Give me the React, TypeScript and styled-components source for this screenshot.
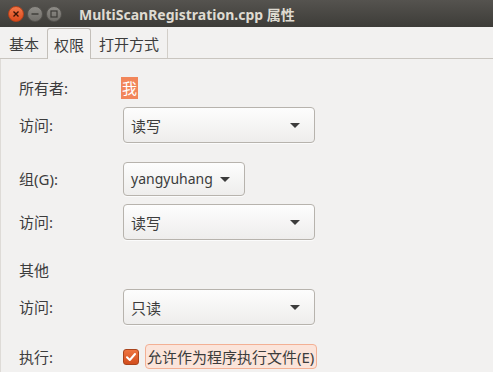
import styled, { createGlobalStyle } from "styled-components";

const GlobalStyle = createGlobalStyle`
  html, body {
    margin: 0;
    padding: 0;
    background: #f2f1f0;
  }
  body {
    font-family: "Noto Sans", "Noto Sans CJK SC", sans-serif;
    font-size: 15px;
    color: #3c3c3c;
  }
`;

const Window = styled.div`
  width: 493px;
  height: 372px;
  overflow: hidden;
  background: #f2f1f0;
  display: flex;
  flex-direction: column;
`;

const TitleBar = styled.div`
  height: 27px;
  flex: none;
  display: flex;
  align-items: center;
  padding-left: 8px;
  background: linear-gradient(#55534f, #3d3c38);
  box-sizing: border-box;
`;

const WindowButtons = styled.div`
  display: flex;
  gap: 3px;
  margin-right: 17px;
  margin-top: 1px;
`;

const WinButton = styled.div<{ $kind: "close" | "plain" }>`
  width: 16px;
  height: 16px;
  border-radius: 50%;
  display: flex;
  align-items: center;
  justify-content: center;
  box-sizing: border-box;
  border: 1px solid ${(p) => (p.$kind === "close" ? "#b8421a" : "#55534f")};
  background: ${(p) =>
    p.$kind === "close"
      ? "linear-gradient(#f2784a, #dc4a1c)"
      : "linear-gradient(#8e8c87, #706e69)"};
`;

const Title = styled.div`
  font-size: 14px;
  font-weight: 700;
  color: #dfdbd2;
  margin-top: 1px;
  white-space: nowrap;
`;

const TabBar = styled.div`
  height: 32px;
  flex: none;
  display: flex;
  align-items: flex-end;
  padding-left: 2px;
  gap: 1px;
  border-bottom: 1px solid #c9c5bf;
  box-sizing: border-box;
`;

const Tab = styled.div<{ $active?: boolean }>`
  padding: 0 6px;
  display: flex;
  align-items: center;
  border: 1px solid ${(p) => (p.$active ? "#c3bfb9" : "transparent")};
  border-bottom: none;
  border-radius: 3px 3px 0 0;
  background: ${(p) => (p.$active ? "#f4f3f2" : "transparent")};
  margin-bottom: ${(p) => (p.$active ? "-1px" : "0")};
  height: ${(p) => (p.$active ? "31px" : "30px")};
  box-sizing: border-box;
  font-size: 15px;
  color: #3c3c3c;
`;

const TabEnd = styled.div`
  width: 1px;
  height: 29px;
  background: #d2cec8;
`;

const Content = styled.div`
  flex: 1;
  display: flex;
  flex-direction: column;
  gap: 19px;
  padding: 18px 0 0 18px;
  border-left: 1px solid #dedbd7;
`;

const Section = styled.div`
  display: grid;
  grid-template-columns: 104px auto;
  justify-content: start;
  justify-items: start;
  align-items: center;
  row-gap: 8px;
`;

const Label = styled.div`
  font-size: 15px;
  line-height: 22px;
  color: #3c3c3c;
`;

const OwnerName = styled.span`
  margin-left: -2px;
  padding: 0 1px;
  line-height: 22px;
  background: #f2865a;
  color: #ffffff;
`;

const Combo = styled.div<{ $width?: number; $height?: number }>`
  width: ${(p) => (p.$width ? `${p.$width}px` : "auto")};
  height: ${(p) => p.$height ?? 36}px;
  box-sizing: border-box;
  display: flex;
  align-items: center;
  justify-content: space-between;
  gap: 7px;
  padding: 0 13px 0 7px;
  border: 1px solid #b7b3ad;
  border-radius: 4px;
  background: linear-gradient(#fdfdfd, #eeedec);
  box-shadow: 0 1px 0 rgba(255, 255, 255, 0.7);
  font-size: 15px;
  color: #3c3c3c;
`;

const ComboText = styled.span<{ $latin?: boolean }>`
  font-size: ${(p) => (p.$latin ? "14px" : "15px")};
  margin-top: ${(p) => (p.$latin ? "-2px" : "0")};
`;

const Arrow = styled.span`
  width: 0;
  height: 0;
  border-left: 5px solid transparent;
  border-right: 5px solid transparent;
  border-top: 5px solid #3c3c3c;
  margin-right: 1px;
`;

const CheckRow = styled.div`
  display: flex;
  align-items: center;
  gap: 6px;
`;

const Checkbox = styled.div`
  width: 16px;
  height: 16px;
  box-sizing: border-box;
  border-radius: 3px;
  border: 1px solid #a9441c;
  background: linear-gradient(#ee7440, #d24d1d);
  display: flex;
  align-items: center;
  justify-content: center;
`;

const CheckLabel = styled.div`
  height: 25px;
  box-sizing: border-box;
  display: flex;
  align-items: center;
  padding: 0 2px 0 1px;
  border: 1px solid #f3b094;
  border-radius: 4px;
  background: #fbe4da;
  font-size: 15px;
  color: #3c3c3c;
`;

const accessRows = [
  { key: "owner", value: "读写" },
  { key: "group", value: "读写" },
  { key: "other", value: "只读" },
];

const App = () => {
  return (
    <>
      <GlobalStyle />
      <Window>
        <TitleBar>
          <WindowButtons>
            <WinButton $kind="close">
              <svg width="8" height="8" viewBox="0 0 8 8">
                <path d="M1.5 1.5L6.5 6.5M6.5 1.5L1.5 6.5" stroke="#3a1406" strokeWidth="1.4" />
              </svg>
            </WinButton>
            <WinButton $kind="plain">
              <svg width="8" height="8" viewBox="0 0 8 8">
                <path d="M0.5 4H7.5" stroke="#3c3b37" strokeWidth="1.4" />
              </svg>
            </WinButton>
            <WinButton $kind="plain">
              <svg width="8" height="8" viewBox="0 0 8 8">
                <rect x="1" y="1" width="6" height="6" fill="none" stroke="#3c3b37" strokeWidth="1.2" />
              </svg>
            </WinButton>
          </WindowButtons>
          <Title>MultiScanRegistration.cpp 属性</Title>
        </TitleBar>

        <TabBar>
          <Tab>基本</Tab>
          <Tab $active>权限</Tab>
          <Tab>打开方式</Tab>
          <TabEnd />
        </TabBar>

        <Content>
          <Section>
            <Label>所有者:</Label>
            <OwnerName>我</OwnerName>
            <Label>访问:</Label>
            <Combo $width={192}>
              <ComboText>{accessRows[0].value}</ComboText>
              <Arrow />
            </Combo>
          </Section>

          <Section>
            <Label>组(G):</Label>
            <Combo $height={34}>
              <ComboText $latin>yangyuhang</ComboText>
              <Arrow />
            </Combo>
            <Label>访问:</Label>
            <Combo $width={192}>
              <ComboText>{accessRows[1].value}</ComboText>
              <Arrow />
            </Combo>
          </Section>

          <Section>
            <Label>其他</Label>
            <span />
            <Label>访问:</Label>
            <Combo $width={192}>
              <ComboText>{accessRows[2].value}</ComboText>
              <Arrow />
            </Combo>
          </Section>

          <Section>
            <Label>执行:</Label>
            <CheckRow>
              <Checkbox>
                <svg width="12" height="12" viewBox="0 0 12 12">
                  <path
                    d="M2 6.2L4.8 9L10 3"
                    fill="none"
                    stroke="#ffffff"
                    strokeWidth="2"
                    strokeLinecap="round"
                    strokeLinejoin="round"
                  />
                </svg>
              </Checkbox>
              <CheckLabel>允许作为程序执行文件(E)</CheckLabel>
            </CheckRow>
          </Section>
        </Content>
      </Window>
    </>
  );
};

export default App;
